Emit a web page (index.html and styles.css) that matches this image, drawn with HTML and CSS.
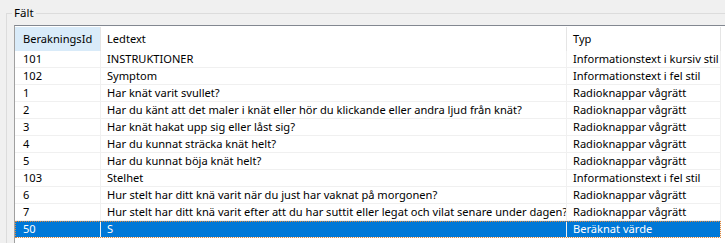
FILE: index.html
```html
<!DOCTYPE html>
<html lang="sv">
  <head>
    <meta charset="UTF-8" />
    <title>Fält</title>
    <link rel="stylesheet" href="styles.css">
  </head>
  <body>
    <div class="group">
      <span class="group-title">Fält</span>
      <div class="grid">
        <div class="grid-head">
          <div class="cell first hot">BerakningsId</div>
          <div class="cell">Ledtext</div>
          <div class="cell">Typ</div>
        </div>
        <div class="grid-row">
          <div class="cell first">101</div>
          <div class="cell">INSTRUKTIONER</div>
          <div class="cell">Informationstext i kursiv stil</div>
        </div>
        <div class="grid-row">
          <div class="cell first">102</div>
          <div class="cell">Symptom</div>
          <div class="cell">Informationstext i fel stil</div>
        </div>
        <div class="grid-row">
          <div class="cell first">1</div>
          <div class="cell">Har knät varit svullet?</div>
          <div class="cell">Radioknappar vågrätt</div>
        </div>
        <div class="grid-row">
          <div class="cell first">2</div>
          <div class="cell">Har du känt att det maler i knät eller hör du klickande eller andra ljud från knät?</div>
          <div class="cell">Radioknappar vågrätt</div>
        </div>
        <div class="grid-row">
          <div class="cell first">3</div>
          <div class="cell">Har knät hakat upp sig eller låst sig?</div>
          <div class="cell">Radioknappar vågrätt</div>
        </div>
        <div class="grid-row">
          <div class="cell first">4</div>
          <div class="cell">Har du kunnat sträcka knät helt?</div>
          <div class="cell">Radioknappar vågrätt</div>
        </div>
        <div class="grid-row">
          <div class="cell first">5</div>
          <div class="cell">Har du kunnat böja knät helt?</div>
          <div class="cell">Radioknappar vågrätt</div>
        </div>
        <div class="grid-row">
          <div class="cell first">103</div>
          <div class="cell">Stelhet</div>
          <div class="cell">Informationstext i fel stil</div>
        </div>
        <div class="grid-row">
          <div class="cell first">6</div>
          <div class="cell">Hur stelt har ditt knä varit när du just har vaknat på morgonen?</div>
          <div class="cell">Radioknappar vågrätt</div>
        </div>
        <div class="grid-row">
          <div class="cell first">7</div>
          <div class="cell">Hur stelt har ditt knä varit efter att du har suttit eller legat och vilat senare under dagen?</div>
          <div class="cell">Radioknappar vågrätt</div>
        </div>
        <div class="grid-row selected">
          <div class="cell first">50</div>
          <div class="cell">S</div>
          <div class="cell">Beräknat värde</div>
        </div>
      </div>
    </div>
  </body>
</html>
```

FILE: styles.css
```css
* {
  box-sizing: border-box;
}

body {
  margin: 0;
  height: 243px;
  overflow: hidden;
  background-color: #f0f0f0;
  color: #000;
  font-family: "Noto Sans", sans-serif;
  font-size: 11.1px;
}

.group {
  position: relative;
  margin: 13px 0 0 6px;
  padding: 11px 0 0 7px;
  border-top: 1px solid #dcdcdc;
  border-left: 1px solid #dcdcdc;
}

.group-title {
  position: absolute;
  top: -9px;
  left: 5px;
  padding: 0 2px;
  line-height: 16px;
  font-size: 11.5px;
  background-color: #f0f0f0;
}

.grid {
  height: 218px;
  overflow: hidden;
  background-color: #fff;
  border-top: 1px solid #828790;
  border-left: 1px solid #a0a0a0;
}

.grid-head,
.grid-row {
  display: grid;
  grid-template-columns: 86px 466px 154px;
  width: 706px;
}

.grid-head {
  padding-top: 1px;
  line-height: 24px;
}

.grid-head .cell {
  border-right-color: #e5e5e5;
}

.grid-row {
  line-height: 16px;
  border-bottom: 1px solid #f0f0f0;
}

.cell {
  padding-left: 6px;
  border-right: 1px solid #f0f0f0;
  white-space: nowrap;
  overflow: hidden;
}

.cell.first {
  padding-left: 8px;
}

.cell.hot {
  background-color: #d9ebf9;
}

.grid-row.selected {
  background-color: #0078d7;
  color: #fff;
  outline: 1px dotted #e0873a;
  outline-offset: -1px;
}
```
